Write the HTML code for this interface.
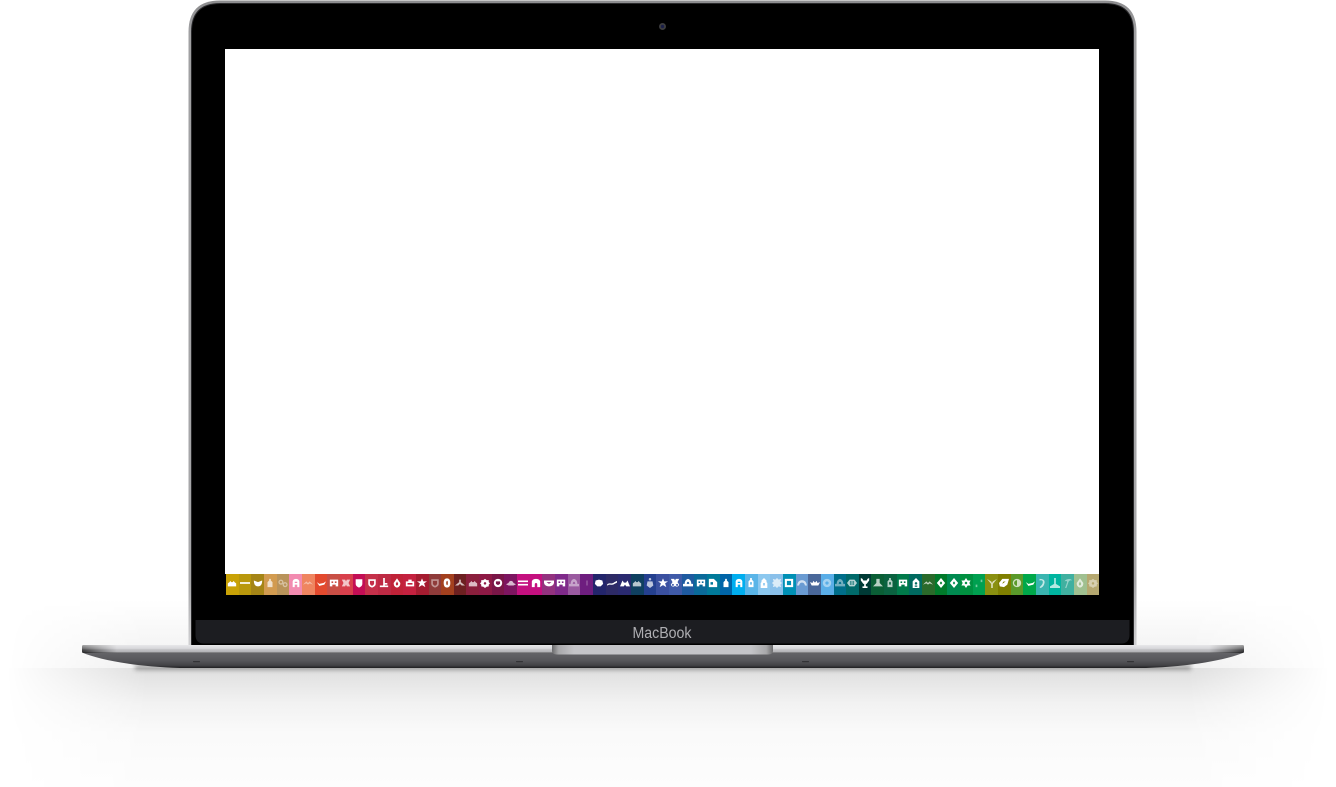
<!DOCTYPE html>
<html lang="en"><head><meta charset="utf-8"><title>MacBook</title>
<style>
html,body{margin:0;padding:0;background:#fff;width:1336px;height:787px;overflow:hidden}
#s{position:absolute;left:0;top:0}
#strip{position:absolute;left:226px;top:574px;width:873px;height:20.500px;display:flex;filter:blur(.35px)}
#strip i{flex:1 1 0;display:flex;align-items:center;justify-content:center;padding-bottom:3px;box-sizing:border-box}
#strip svg{width:10px;height:10px;display:block;fill:#fff;stroke:none}
#strip .d svg{opacity:.45}
#strip .m svg{opacity:.7}
</style></head><body>
<svg id="s" width="1336" height="787" viewBox="0 0 1336 787">
<defs>
<linearGradient id="lid" x1="0" y1="0" x2="0" y2="1"><stop offset="0" stop-color="#8c8c8e"/><stop offset=".05" stop-color="#a0a0a2"/><stop offset=".9" stop-color="#a8a8aa"/><stop offset="1" stop-color="#d0d0d2"/></linearGradient>
<linearGradient id="top" x1="0" y1="0" x2="1" y2="0"><stop offset="0" stop-color="#3a3a3c"/><stop offset=".012" stop-color="#77777a"/><stop offset=".03" stop-color="#cacace"/><stop offset=".97" stop-color="#cacace"/><stop offset=".988" stop-color="#77777a"/><stop offset="1" stop-color="#3a3a3c"/></linearGradient>
<linearGradient id="topv" x1="0" y1="0" x2="0" y2="1"><stop offset="0" stop-color="#fff" stop-opacity=".55"/><stop offset=".45" stop-color="#fff" stop-opacity=".25"/><stop offset=".8" stop-color="#000" stop-opacity=".05"/><stop offset="1" stop-color="#000" stop-opacity=".5"/></linearGradient>
<linearGradient id="bot" x1="0" y1="0" x2="0" y2="1"><stop offset="0" stop-color="#67676b"/><stop offset=".55" stop-color="#57575b"/><stop offset=".85" stop-color="#424245"/><stop offset="1" stop-color="#1e1e20"/></linearGradient>
<linearGradient id="notch" x1="0" y1="0" x2="1" y2="0"><stop offset="0" stop-color="#6a6a6c"/><stop offset=".03" stop-color="#a8a8aa"/><stop offset=".1" stop-color="#c4c4c8"/><stop offset=".9" stop-color="#c4c4c8"/><stop offset=".97" stop-color="#a8a8aa"/><stop offset="1" stop-color="#6a6a6c"/></linearGradient>
<linearGradient id="sh" x1="0" y1="668" x2="0" y2="787" gradientUnits="userSpaceOnUse"><stop offset="0" stop-color="#dedede"/><stop offset=".12" stop-color="#e6e6e6"/><stop offset=".3" stop-color="#f2f2f2"/><stop offset=".55" stop-color="#fafafa"/><stop offset="1" stop-color="#fdfdfd"/></linearGradient>
<linearGradient id="haze" x1="0" y1="600" x2="0" y2="668" gradientUnits="userSpaceOnUse"><stop offset="0" stop-color="#fff"/><stop offset="1" stop-color="#f0f0f0"/></linearGradient>
<linearGradient id="mg" x1="0" y1="0" x2="1336" y2="0" gradientUnits="userSpaceOnUse"><stop offset=".005" stop-color="#000"/><stop offset=".05" stop-color="#666"/><stop offset=".11" stop-color="#fff"/><stop offset=".89" stop-color="#fff"/><stop offset=".95" stop-color="#666"/><stop offset=".995" stop-color="#000"/></linearGradient>
<mask id="fade" maskUnits="userSpaceOnUse" x="0" y="0" width="1336" height="787"><rect width="1336" height="787" fill="url(#mg)"/></mask>
<filter id="b2" x="-5%" y="-200%" width="110%" height="500%"><feGaussianBlur stdDeviation="2"/></filter>
</defs>
<!-- floor shadow -->
<g mask="url(#fade)">
<rect x="0" y="600" width="1336" height="68" fill="url(#haze)"/>
<rect x="0" y="668" width="1336" height="119" fill="url(#sh)"/>
</g>
<rect x="135" y="665" width="1056" height="5" fill="#444" opacity=".45" filter="url(#b2)"/>
<!-- lid -->
<path d="M188.500 646V32Q188.500 .5 220 .5H1105Q1136.500 .5 1136.500 32V646Z" fill="url(#lid)"/>
<path d="M191 646V32Q191 3 220 3H1105Q1134 3 1134 32V646Z" fill="#2a2a2c"/>
<path d="M192 646V32Q192 4 220 4H1105Q1133 4 1133 32V646Z" fill="#000"/>
<!-- screen -->
<rect x="225" y="49" width="874" height="525" fill="#fff"/>
<!-- camera -->
<circle cx="662.500" cy="26.500" r="3.500" fill="#3c3c3e"/>
<circle cx="662.500" cy="26.500" r="1.600" fill="#1a1f4a"/>
<!-- chin -->
<path d="M195.500 620H1129.500V635Q1129.500 643.500 1121 643.500H204Q195.500 643.500 195.500 635Z" fill="#1c1d21"/>
<text x="662" y="638" font-family="'Liberation Sans',sans-serif" font-size="15.500" fill="#aeaeb2" text-anchor="middle" textLength="59" lengthAdjust="spacingAndGlyphs">MacBook</text>
<!-- base -->
<path d="M82 652.500C100 660 135 666.500 180 668H1146C1191 666.500 1226 660 1244 652.500V651H82Z" fill="url(#bot)"/>
<path d="M83.500 645H1242.500Q1244 645 1244 647V651Q1244 653 1242 653H84Q82 653 82 651V647Q82 645 83.500 645Z" fill="url(#top)"/>
<path d="M83.500 645H1242.500Q1244 645 1244 647V651Q1244 653 1242 653H84Q82 653 82 651V647Q82 645 83.500 645Z" fill="url(#topv)"/>
<!-- notch -->
<path d="M552 645H773V651Q773 654.500 768 654.500H557Q552 654.500 552 651Z" fill="url(#notch)"/>
<!-- vents -->
<g fill="#333336"><rect x="193" y="661" width="7" height="1.200" rx=".6"/><rect x="516" y="661" width="7" height="1.200" rx=".6"/><rect x="802" y="661" width="7" height="1.200" rx=".6"/><rect x="1127" y="661" width="7" height="1.200" rx=".6"/></g>
<!-- icon shapes -->
<defs>
<symbol id="cake" viewBox="0 0 12 12"><path d="M1 10V6.500L3 5 4 3.500 5 5H7L8 3.500 9 5 11 6.500V10Z"/></symbol>
<symbol id="dash" viewBox="0 0 12 12"><rect x="0" y="5" width="12" height="2"/></symbol>
<symbol id="blob" viewBox="0 0 12 12"><path d="M1 3 6 5 11 3Q11 10 6 10T1 3Z"/></symbol>
<symbol id="bottle" viewBox="0 0 12 12"><path d="M5 1H7V3L9 5V11H3V5L5 3Z"/></symbol>
<symbol id="ring2" viewBox="0 0 12 12"><path fill-rule="evenodd" d="M3.500 2a3 3 0 1 0 .01 0ZM8.500 5a3 3 0 1 0 .01 0ZM3.500 3.500a1.500 1.500 0 1 1-.01 0ZM8.500 6.500a1.500 1.500 0 1 1-.01 0Z"/></symbol>
<symbol id="arch" viewBox="0 0 12 12"><path fill-rule="evenodd" d="M2 11V5Q2 1 6 1T10 5V11ZM4.500 11H7.500V8H4.500ZM4.500 6H7.500V4.500H4.500Z"/></symbol>
<symbol id="wings" viewBox="0 0 12 12"><path d="M0 8 4 4 6 6 8 4 12 8 8 6.500 6 8 4 6.500Z"/></symbol>
<symbol id="bird" viewBox="0 0 12 12"><path d="M1 5 4 7 9 6 12 4 10 8 4 9.500Z"/></symbol>
<symbol id="frame" viewBox="0 0 12 12"><path fill-rule="evenodd" d="M1 2H11V10H8V8H4V10H1ZM3 4V6H5V4ZM7 4V6H9V4Z"/></symbol>
<symbol id="cross" viewBox="0 0 12 12"><path fill-rule="evenodd" d="M1 2H5L6 4 7 2H11L9 6 11 10H7L6 8 5 10H1L3 6Z"/></symbol>
<symbol id="shield" viewBox="0 0 12 12"><path d="M2 1.500H10V7Q10 10 6 11.500 2 10 2 7Z"/></symbol>
<symbol id="shieldo" viewBox="0 0 12 12"><path fill-rule="evenodd" d="M1.500 1.500H10.500V7Q10.500 10 6 11.500 1.500 10 1.500 7ZM3.500 3.500V7Q4 8.500 6 9.500 8 8.500 8.500 7V3.500Z"/></symbol>
<symbol id="scope" viewBox="0 0 12 12"><path d="M5 0H7V6H10V8H7V9H11V11H1V9H5Z"/></symbol>
<symbol id="drop" viewBox="0 0 12 12"><path fill-rule="evenodd" d="M6 .500 10 6Q10 11 6 11.500 2 11 2 6ZM6 4 4.500 7Q5 9 6 9T7.500 7Z"/></symbol>
<symbol id="box" viewBox="0 0 12 12"><path fill-rule="evenodd" d="M1 4H4V2H8V4H11V10H1ZM3 6V8H9V6Z"/></symbol>
<symbol id="star" viewBox="0 0 12 12"><path d="M6 .500 7.500 4H12L8.500 6.500 10 11 6 8.500 2 11 3.500 6.500 0 4H4.500Z"/></symbol>
<symbol id="oval" viewBox="0 0 12 12"><path fill-rule="evenodd" d="M6 .500Q10 .500 10 6T6 11.500 2 6 6 .500ZM6 3.500Q5 4 5 6T6 8.500 7 6 6 3.500Z"/></symbol>
<symbol id="fig" viewBox="0 0 12 12"><path d="M5 2H7V5L12 9H8L6 7 4 9H0L5 5Z"/></symbol>
<symbol id="flower" viewBox="0 0 12 12"><path fill-rule="evenodd" d="M6 1 8 2.500H10.500V5L12 6.500 10.500 8V10L8 10.500 6 12 4 10.500 1.500 10V8L0 6.500 1.500 5V2.500H4ZM6 5a1.500 1.500 0 1 0 .01 0Z"/></symbol>
<symbol id="ring" viewBox="0 0 12 12"><path fill-rule="evenodd" d="M6 1a5 5 0 1 0 .01 0ZM3.500 4H8.500V7L6 8.500 3.500 7Z"/></symbol>
<symbol id="hat" viewBox="0 0 12 12"><path d="M3 6Q4 3.500 6 3.500T9 6L12 7.500 9 9H3L0 7.500Z"/></symbol>
<symbol id="bars" viewBox="0 0 12 12"><path d="M0 3H12V5H0ZM0 7H12V9H0Z"/></symbol>
<symbol id="arches" viewBox="0 0 12 12"><path fill-rule="evenodd" d="M1 11V5Q1 1 6 1T11 5V11H7.500V8Q7.500 6 6 6T4.500 8V11Z"/></symbol>
<symbol id="bowl" viewBox="0 0 12 12"><path fill-rule="evenodd" d="M0 3H12V6Q11 10 6 10T0 6ZM3 5 6 7 9 5Z"/></symbol>
<symbol id="tiny" viewBox="0 0 12 12"><rect x="5.500" y="3" width="1" height="6"/></symbol>
<symbol id="round" viewBox="0 0 12 12"><path d="M2 3 6 2 10 3 11 7 8 10H4L1 7Z"/></symbol>
<symbol id="wave" viewBox="0 0 12 12"><path d="M0 8Q1 6 4 6.500T9 5L12 3.500V5.500L9 7Q7 8.500 4 8T1 9.500Z"/></symbol>
<symbol id="peaks" viewBox="0 0 12 12"><path d="M0 10 3 3 5 6 6 5 7 6 9 3 12 10H7.500L6 8 4.500 10Z"/></symbol>
<symbol id="figt" viewBox="0 0 12 12"><path d="M6 0a1.500 1.500 0 1 1-.01 0ZM3 4H9L10 9 6 12 2 9Z"/></symbol>
<symbol id="rings" viewBox="0 0 12 12"><path fill-rule="evenodd" d="M1 1H5L6 3 7 1H11L9 5 11 8A3 3 0 0 1 6 9.500 3 3 0 0 1 1 8L3 5ZM3.500 7a1.200 1.200 0 1 0 .01 0ZM8.500 7a1.200 1.200 0 1 0 .01 0Z"/></symbol>
<symbol id="dome" viewBox="0 0 12 12"><path fill-rule="evenodd" d="M6 1Q10 2 10 7H12V10H0V7H2Q2 2 6 1ZM6 4.500Q4.500 5 4.500 7H7.500Q7.500 5 6 4.500Z"/></symbol>
<symbol id="squb" viewBox="0 0 12 12"><path fill-rule="evenodd" d="M1 1H7L11 5V11H1ZM3 5V8H6V5Z"/></symbol>
<symbol id="house" viewBox="0 0 12 12"><path fill-rule="evenodd" d="M6 0 9 3V5L10 6V12H2V6L3 5V3ZM5 6V9H7V6Z"/></symbol>
<symbol id="snow" viewBox="0 0 12 12"><path d="M6 0 8 2 11 1 10 4 12 6 10 8 11 11 8 10 6 12 4 10 1 11 2 8 0 6 2 4 1 1 4 2Z"/></symbol>
<symbol id="sq" viewBox="0 0 12 12"><path fill-rule="evenodd" d="M1 1H11V11H1ZM3.500 3.500V8.500H8.500V3.500Z"/></symbol>
<symbol id="arc" viewBox="0 0 12 12"><path d="M0 9Q1 2.500 6 2.500T12 9H9.500Q9 5.500 6 5.500T2.500 9Z"/></symbol>
<symbol id="lotus" viewBox="0 0 12 12"><path d="M0 5 3 6 4 3.500 6 5.500 8 3.500 9 6 12 5 10 9H2Z"/></symbol>
<symbol id="circ" viewBox="0 0 12 12"><path fill-rule="evenodd" d="M6 1a5 5 0 1 0 .01 0ZM6 4a2 2 0 1 1-.01 0Z"/></symbol>
<symbol id="grid" viewBox="0 0 12 12"><path fill-rule="evenodd" d="M3 2H9L12 6 9 10H3L0 6ZM3.500 4V5.500H5.500V4ZM6.500 4V5.500H8.500V4ZM3.500 6.500V8H5.500V6.500ZM6.500 6.500V8H8.500V6.500Z"/></symbol>
<symbol id="goblet" viewBox="0 0 12 12"><path d="M1 0 3 1 4 3H8L9 1 11 0V3L8 7H7V10H9V12H3V10H5V7H4L1 3Z"/></symbol>
<symbol id="hat2" viewBox="0 0 12 12"><path d="M4 1H8V6L12 10H0L4 6Z"/></symbol>
<symbol id="lant" viewBox="0 0 12 12"><path fill-rule="evenodd" d="M5 0H7V2L9 4V11H3V4L5 2ZM5 5V8H7V5Z"/></symbol>
<symbol id="dhouse" viewBox="0 0 12 12"><path fill-rule="evenodd" d="M6 0 10 4V12H2V4ZM6 5a1.500 1.500 0 1 0 .01 0ZM4.500 9V10.500H7.500V9Z"/></symbol>
<symbol id="diam" viewBox="0 0 12 12"><path fill-rule="evenodd" d="M6 0 11 6 6 12 1 6ZM6 4 4.500 6 6 8 7.500 6Z"/></symbol>
<symbol id="dav" viewBox="0 0 12 12"><path fill-rule="evenodd" d="M6 0 8 3H11.500L10 6 11.500 9H8L6 12 4 9H.500L2 6 .500 3H4ZM6 4.500a1.500 1.500 0 1 0 .01 0Z"/></symbol>
<symbol id="notes" viewBox="0 0 12 12"><path d="M2 8H4V11H2ZM8 2H10V5H8Z"/></symbol>
<symbol id="y" viewBox="0 0 12 12"><path d="M0 1 5 4 6 6 7 4 12 1 8 6 7 7V12H5V7L4 6Z"/></symbol>
<symbol id="leaf" viewBox="0 0 12 12"><path fill-rule="evenodd" d="M4 1H12L10 8 6 11 1 10 0 6ZM4 7 8 4 5 4.500Z"/></symbol>
<symbol id="half" viewBox="0 0 12 12"><path fill-rule="evenodd" d="M6 1a5 5 0 1 0 .01 0ZM6 2.500V9.500a3.500 3.500 0 0 1 0-7Z"/></symbol>
<symbol id="harp" viewBox="0 0 12 12"><path d="M3 1Q10 1 9 6T4 12L3 11Q7 8 7 5T3 3Z"/></symbol>
<symbol id="bell" viewBox="0 0 12 12"><path d="M5 0H7V7L12 10V12H0V10L5 7Z"/></symbol>
<symbol id="swirl" viewBox="0 0 12 12"><path d="M4 2Q9 0 11 3 8 2 6.500 5L4 12H2.500L5 5Q5 3 2 4 2 3 4 2Z"/></symbol>
</defs>
</svg>
<div id="strip">
<i style="background:#c9a206"><svg><use href="#cake"/></svg></i>
<i style="background:#b9980c"><svg><use href="#dash"/></svg></i>
<i style="background:#a58516"><svg><use href="#blob"/></svg></i>
<i class="m" style="background:#d29b50"><svg><use href="#bottle"/></svg></i>
<i class="d" style="background:#b9935a"><svg><use href="#ring2"/></svg></i>
<i style="background:#f28bb0"><svg><use href="#arch"/></svg></i>
<i class="d" style="background:#ef8560"><svg><use href="#wings"/></svg></i>
<i style="background:#e34a2e"><svg><use href="#bird"/></svg></i>
<i style="background:#c94f45"><svg><use href="#frame"/></svg></i>
<i class="m" style="background:#d8404c"><svg><use href="#cross"/></svg></i>
<i style="background:#c30e55"><svg><use href="#shield"/></svg></i>
<i style="background:#c5304a"><svg><use href="#shieldo"/></svg></i>
<i style="background:#be2a44"><svg><use href="#scope"/></svg></i>
<i style="background:#c02238"><svg><use href="#drop"/></svg></i>
<i style="background:#c4213f"><svg><use href="#box"/></svg></i>
<i style="background:#a51c30"><svg><use href="#star"/></svg></i>
<i class="d" style="background:#8f3b3a"><svg><use href="#shieldo"/></svg></i>
<i style="background:#a3401e"><svg><use href="#oval"/></svg></i>
<i class="m" style="background:#6d2020"><svg><use href="#fig"/></svg></i>
<i class="m" style="background:#8a1f3c"><svg><use href="#cake"/></svg></i>
<i style="background:#8e1a45"><svg><use href="#flower"/></svg></i>
<i style="background:#7a1647"><svg><use href="#ring"/></svg></i>
<i class="m" style="background:#7d1560"><svg><use href="#hat"/></svg></i>
<i style="background:#c4107f"><svg><use href="#bars"/></svg></i>
<i style="background:#c4107f"><svg><use href="#arches"/></svg></i>
<i style="background:#93327f"><svg><use href="#bowl"/></svg></i>
<i style="background:#7f2a8a"><svg><use href="#frame"/></svg></i>
<i class="d" style="background:#9a5aa0"><svg><use href="#dome"/></svg></i>
<i class="d" style="background:#6e1e7f"><svg><use href="#tiny"/></svg></i>
<i style="background:#23256b"><svg><use href="#round"/></svg></i>
<i style="background:#2d2a66"><svg><use href="#wave"/></svg></i>
<i style="background:#2a2a70"><svg><use href="#peaks"/></svg></i>
<i class="m" style="background:#0f4060"><svg><use href="#cake"/></svg></i>
<i class="m" style="background:#24408f"><svg><use href="#figt"/></svg></i>
<i style="background:#3a50a0"><svg><use href="#star"/></svg></i>
<i style="background:#3f5aa8"><svg><use href="#rings"/></svg></i>
<i style="background:#1e5aa0"><svg><use href="#dome"/></svg></i>
<i style="background:#0a6a9a"><svg><use href="#frame"/></svg></i>
<i style="background:#007a9a"><svg><use href="#squb"/></svg></i>
<i style="background:#0065a8"><svg><use href="#bottle"/></svg></i>
<i style="background:#00aeef"><svg><use href="#arch"/></svg></i>
<i style="background:#5ab5e8"><svg><use href="#lant"/></svg></i>
<i style="background:#8cc8ef"><svg><use href="#house"/></svg></i>
<i class="m" style="background:#8ac0ea"><svg><use href="#snow"/></svg></i>
<i style="background:#0090b5"><svg><use href="#sq"/></svg></i>
<i class="m" style="background:#6a9bd2"><svg><use href="#arc"/></svg></i>
<i style="background:#4a689a"><svg><use href="#lotus"/></svg></i>
<i class="d" style="background:#5aaee8"><svg><use href="#circ"/></svg></i>
<i class="d" style="background:#006e8a"><svg><use href="#dome"/></svg></i>
<i class="m" style="background:#006a6a"><svg><use href="#grid"/></svg></i>
<i style="background:#003a35"><svg><use href="#goblet"/></svg></i>
<i class="m" style="background:#0a5e35"><svg><use href="#hat2"/></svg></i>
<i class="m" style="background:#0a6240"><svg><use href="#lant"/></svg></i>
<i style="background:#007a4a"><svg><use href="#frame"/></svg></i>
<i style="background:#006a60"><svg><use href="#dhouse"/></svg></i>
<i class="m" style="background:#2a6a2a"><svg><use href="#wings"/></svg></i>
<i style="background:#007a2a"><svg><use href="#diam"/></svg></i>
<i style="background:#008a50"><svg><use href="#diam"/></svg></i>
<i style="background:#009040"><svg><use href="#dav"/></svg></i>
<i class="d" style="background:#00a050"><svg><use href="#notes"/></svg></i>
<i class="m" style="background:#8a9010"><svg><use href="#y"/></svg></i>
<i style="background:#7f7f00"><svg><use href="#leaf"/></svg></i>
<i class="m" style="background:#5a9a2a"><svg><use href="#half"/></svg></i>
<i style="background:#00a84a"><svg><use href="#bird"/></svg></i>
<i class="m" style="background:#3ab5b0"><svg><use href="#harp"/></svg></i>
<i class="m" style="background:#00b5a0"><svg><use href="#bell"/></svg></i>
<i class="d" style="background:#40b0a0"><svg><use href="#swirl"/></svg></i>
<i class="m" style="background:#a0c090"><svg><use href="#drop"/></svg></i>
<i class="d" style="background:#b5a870"><svg><use href="#flower"/></svg></i>
</div>
</body></html>
